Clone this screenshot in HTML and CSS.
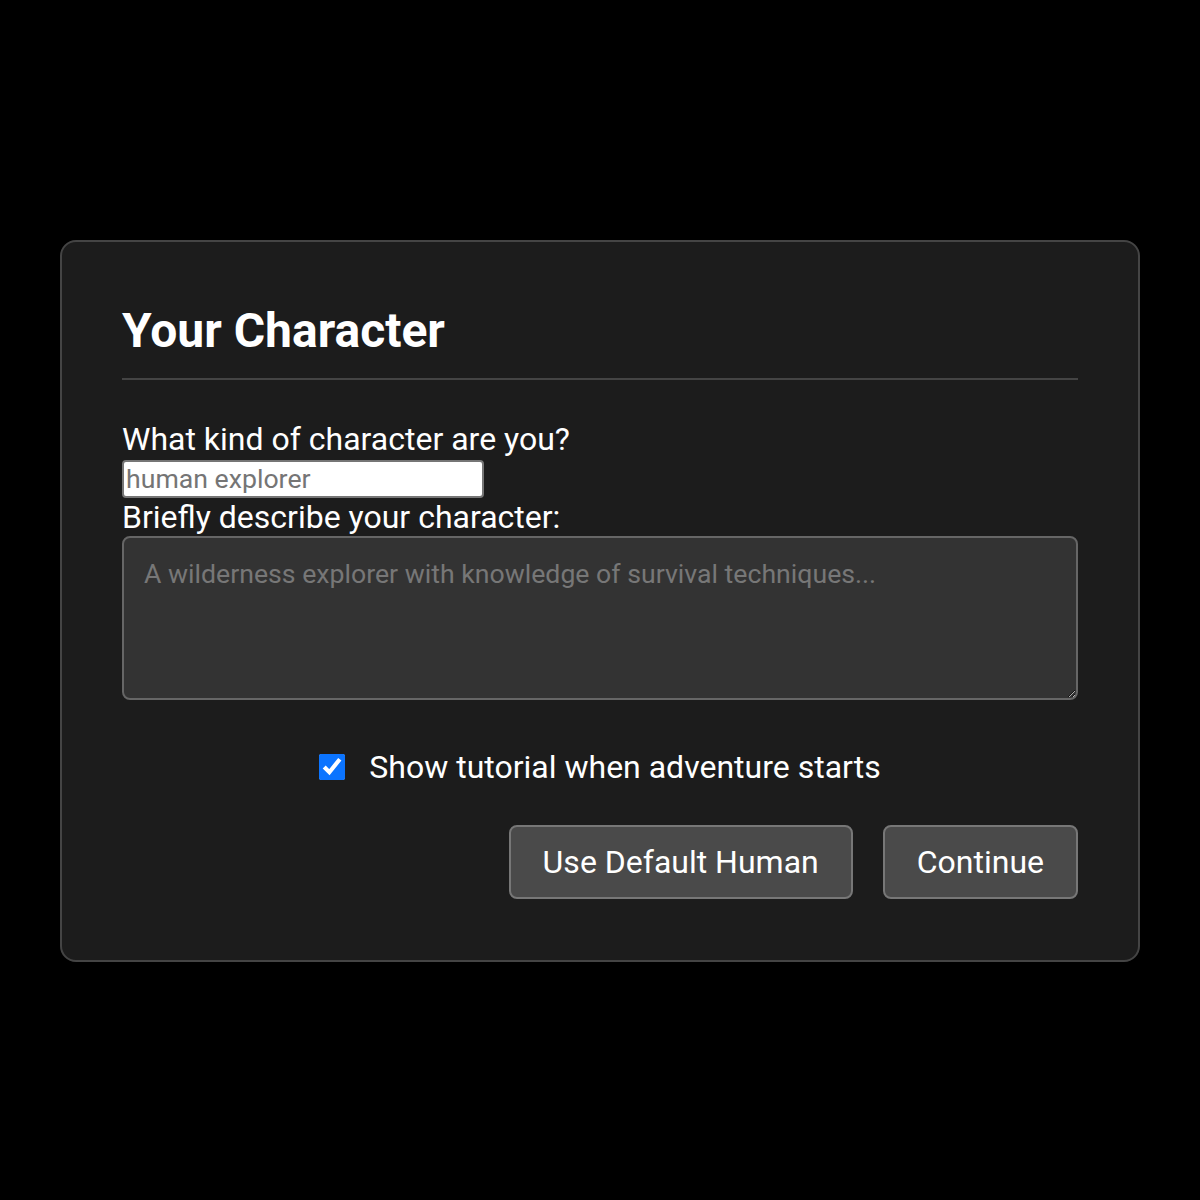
FILE: index.html
```html
<!DOCTYPE html>
<html lang="en">
<head>
<meta charset="utf-8">
<title>Your Character</title>
<link rel="stylesheet" href="styles.css">
</head>
<body>
<main class="stage">
  <section class="card">
    <h2 class="card-title">Your Character</h2>
    <form class="form">
      <label class="label" for="kind">What kind of character are you?</label>
      <input class="kind-input" id="kind" type="text" placeholder="human explorer">
      <label class="label" for="desc">Briefly describe your character:</label>
      <textarea class="desc" id="desc" placeholder="A wilderness explorer with knowledge of survival techniques..."></textarea>
      <div class="check-row">
        <input class="check" id="tut" type="checkbox" checked>
        <label class="check-label" for="tut">Show tutorial when adventure starts</label>
      </div>
      <div class="actions">
        <button type="button" class="btn">Use Default Human</button>
        <button type="button" class="btn">Continue</button>
      </div>
    </form>
  </section>
</main>
</body>
</html>
```

FILE: styles.css
```css
html, body {
  margin: 0;
  padding: 0;
  background: #000;
  font-family: Roboto, "Noto Sans", "Liberation Sans", sans-serif;
  color: #fff;
}
.stage {
  width: 1200px;
  height: 1200px;
  display: flex;
  align-items: flex-start;
  justify-content: center;
  padding-top: 240px;
  box-sizing: border-box;
}
.card {
  box-sizing: border-box;
  width: 1080px;
  background: #1c1c1c;
  border: 2px solid #444;
  border-radius: 16px;
  padding: 60px 60px 61px;
}
.card-title {
  margin: 0;
  font-size: 48px;
  font-weight: 700;
  line-height: normal;
  padding-bottom: 19px;
  border-bottom: 2px solid #444;
}
.form {
  display: flex;
  flex-direction: column;
  align-items: flex-start;
  margin-top: 40px;
}
.label {
  font-size: 32px;
  line-height: normal;
}
.kind-input {
  box-sizing: border-box;
  width: 362px;
  height: 38px;
  margin: 2px 0 0;
  padding: 1px 2px;
  font-family: Roboto, "Noto Sans", sans-serif;
  font-size: 26.67px;
  color: #000;
  background: #fff;
  border: 2px solid #767676;
  border-radius: 4px;
  outline: none;
}
.kind-input::placeholder { color: #757575; }
.desc {
  box-sizing: border-box;
  width: 100%;
  height: 164px;
  margin: 0;
  padding: 20px;
  font-family: Roboto, "Noto Sans", sans-serif;
  font-size: 26.67px;
  color: #fff;
  background: #333;
  border: 2px solid #666;
  border-radius: 8px;
  resize: vertical;
  outline: none;
}
.desc::placeholder { color: #777; }
.check-row {
  align-self: stretch;
  display: flex;
  align-items: center;
  justify-content: center;
  gap: 24px;
  margin-top: 48px;
}
.check {
  width: 26px;
  height: 26px;
  margin: 0;
  accent-color: #0b74ff;
}
.check-label {
  font-size: 32px;
  line-height: normal;
}
.actions {
  align-self: stretch;
  display: flex;
  justify-content: flex-end;
  gap: 30px;
  margin-top: 39px;
}
.btn {
  font-family: Roboto, "Noto Sans", sans-serif;
  font-size: 32px;
  line-height: normal;
  color: #fff;
  background: #4a4a4a;
  border: 2px solid #777;
  border-radius: 8px;
  padding: 16px 32px;
  cursor: pointer;
}
```
